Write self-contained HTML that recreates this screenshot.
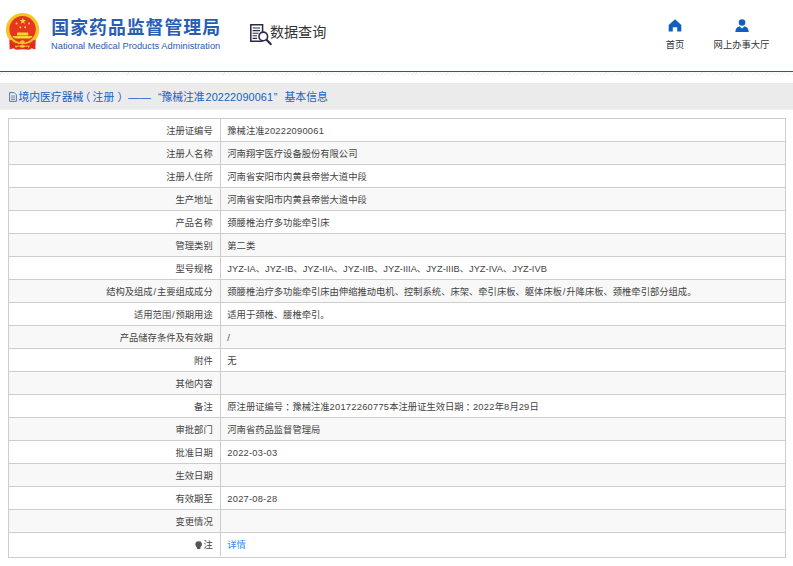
<!DOCTYPE html>
<html lang="zh-CN">
<head>
<meta charset="utf-8">
<title>国家药品监督管理局 数据查询</title>
<style>
*{box-sizing:border-box;margin:0;padding:0}
html,body{width:793px;height:566px;background:#fff;overflow:hidden}
body{position:relative;font-family:"Liberation Sans","Noto Sans CJK SC",sans-serif;color:#444;font-size:9.3px}
.abs{position:absolute;white-space:nowrap}
#emblem{left:0;top:0;width:50px;height:60px}
#title{left:51.3px;top:14.7px;font-size:17.9px;line-height:26px;font-weight:bold;color:#285db4;letter-spacing:.97px}
#sub{left:51px;top:39.6px;font-size:9.32px;line-height:12px;color:#2a5db0}
#qicon{left:249px;top:23px;width:24px;height:23px}
#qtext{left:269.9px;top:20.8px;font-size:14.1px;line-height:22px;color:#333}
.nav{text-align:center;font-size:9.3px;line-height:12px;color:#333}
#n1{left:655px;width:40px;top:38.8px}
#n2{left:701.5px;width:80px;top:38.8px}
#i1{left:668px;top:19.1px;width:14px;height:13px}
#i2{left:734.9px;top:19.4px;width:14.1px;height:13.2px}
#blue{left:0;top:70.6px;width:793px;height:1.5px;background:#0f5db9}
#hatch{left:0;top:72.4px;width:793px;height:3px;
 background:repeating-linear-gradient(135deg,rgba(0,0,0,0) 0,rgba(0,0,0,0) 1.4px,rgba(120,120,120,.13) 1.4px,rgba(120,120,120,.13) 2.19px);}
#bar{left:0;top:83px;width:793px;height:26.8px;background:#ebebeb;border-bottom:1px solid #eef0f7}
#bartext{left:0;top:88.8px;width:793px;height:16px;font-size:10.84px;line-height:16px;color:#1860c2}
.bt{position:absolute;top:0;white-space:nowrap}
#baricon{left:8.5px;top:91.5px;width:8px;height:10px}
#tbl{left:8px;top:118px;width:778px;border-left:1px solid #cdcdcd;border-right:1px solid #cdcdcd;border-bottom:1px solid #cdcdcd}
.r{height:23px;border-top:1px solid #cdcdcd;position:relative;background:#fff}
.r:nth-child(even){background:#f8f8f8}
.r .l{position:absolute;left:0;top:0;width:212px;height:22px;line-height:22px;padding-top:1px;text-align:right;padding-right:7.3px;border-right:1px solid #cdcdcd;white-space:nowrap}
.r .l{width:212px}
.r .v{position:absolute;left:212px;top:0;right:0;height:22px;line-height:22px;padding-top:1px;padding-left:6.3px;white-space:nowrap}
.r.last{height:24.5px}
.r.last .l{height:23px}
a{color:#3388ff;text-decoration:none}
.d{letter-spacing:.25px}
.sl{padding:0 .85px}
.cl{position:relative;left:2.2px}
</style>
</head>
<body>
<svg id="emblem" class="abs" viewBox="0 0 50 60">
 <circle cx="22.550" cy="29.700" r="16.700" fill="#f6c428"/>
 <path d="M9.300 39.500 L9.700 49.500 L13.500 48.300 L16 49.700 L22.500 49.200 L29 49.700 L31.500 48.300 L35.300 49.500 L35.700 39.500 C31 46.500 14 46.500 9.300 39.500 Z" fill="#e02a1c"/>
 <path d="M9.300 39.500 C14 46.800 31 46.800 35.700 39.500 L33.300 40.300 C29 45.400 16 45.400 11.800 40.300 Z" fill="#e02a1c"/>
 <circle cx="22.550" cy="29.500" r="14" fill="none" stroke="#f6c428" stroke-width="1.300"/>
 <circle cx="22.550" cy="29.300" r="13.200" fill="#e6361f"/>
 <path d="M22.800 17.800l.85 2.300h2.450l-1.950 1.500.7 2.400-2.050-1.400-2.050 1.400.7-2.400-1.950-1.500h2.450z" fill="#f9d53a"/>
 <circle cx="16.600" cy="23.400" r="1" fill="#f9d53a"/><circle cx="29" cy="23.400" r="1" fill="#f9d53a"/>
 <circle cx="20.300" cy="27.300" r="1" fill="#f9d53a"/><circle cx="25.200" cy="27.300" r="1" fill="#f9d53a"/>
 <path d="M17.600 32.600h10.200l.8 1.500h-11.800z M17 34.100h11.300v1.500H17z M12.800 35.900h19.400v1.500H12.800z M14.500 37.400h16v1H14.500z" fill="#f9d53a"/>
 <ellipse cx="22.400" cy="41.700" rx="2.300" ry="1.500" fill="#f6c428"/>
 <ellipse cx="22.400" cy="46.200" rx="2.600" ry="1.500" fill="#f6c428"/>
 <path d="M15.300 46.200h14.200" stroke="#f6c428" stroke-width="1"/>
 <path d="M15 45.800l1.800.2-.6 2.800zM29.800 45.800l-1.800.2.600 2.800z" fill="#f6c428"/>
</svg>
<div id="title" class="abs">国家药品监督管理局</div>
<div id="sub" class="abs">National Medical Products Administration</div>

<svg id="qicon" class="abs" viewBox="0 0 24 23" fill="none" stroke="#2b2b45">
 <path d="M13.600 18.300H1.800V1.700h11.800V9" stroke-width="1.500"/>
 <path d="M3.600 5h7.500M3.600 7.600h7.500M3.600 10.200h6M3.600 12.800h4.500M3.600 15.400h4.500" stroke-width="1.100"/>
 <circle cx="14.300" cy="13.400" r="4.300" stroke-width="1.600" fill="#fff"/>
 <path d="M17.500 16.800l4.200 4.300" stroke-width="2.200" stroke-linecap="round"/>
</svg>
<div id="qtext" class="abs">数据查询</div>

<svg id="i1" class="abs" viewBox="0 0 14 13"><path d="M7 0.300L0.700 6v6.500h4.100V8.300h4.400v4.200h4.100V6z" fill="#0f5fbf"/></svg>
<svg id="i2" class="abs" viewBox="0 0 15 14"><circle cx="7.500" cy="3.700" r="3.500" fill="#0f5fbf"/><path d="M0.400 13.800c0-3.500 2-5.400 4.300-6l2.800 2.400 2.800-2.400c2.300.600 4.300 2.500 4.300 6z" fill="#0f5fbf"/></svg>
<div id="n1" class="abs nav">首页</div>
<div id="n2" class="abs nav">网上办事大厅</div>

<div id="blue" class="abs"></div>
<div id="hatch" class="abs"></div>
<div id="bar" class="abs"></div>
<svg id="baricon" class="abs" viewBox="0 0 8 10" fill="none" stroke="#3a6fc0" stroke-width="0.900"><path d="M0.600 0.600h4.600l2.200 2.200v6.600H0.600z"/><path d="M2 4h4M2 5.800h4M2 7.500h4" stroke-width="0.700"/></svg>
<div id="bartext" class="abs"><span class="bt" style="left:18.4px">境内医疗器械</span><span class="bt" style="left:79.5px">（</span><span class="bt" style="left:92.6px">注册</span><span class="bt" style="left:117.5px">）</span><span class="bt" style="left:128.4px;transform:scaleX(1.06);transform-origin:0 0">——</span><span class="bt" style="left:158px">“</span><span class="bt" style="left:161.4px">豫械注准</span><span class="bt" style="left:205.6px;letter-spacing:.11px">20222090061</span><span class="bt" style="left:273.8px">”</span><span class="bt" style="left:284.5px">基本信息</span></div>

<div id="tbl" class="abs">
<div class="r"><div class="l">注册证编号</div><div class="v">豫械注准<span class="d">20222090061</span></div></div>
<div class="r"><div class="l">注册人名称</div><div class="v">河南翔宇医疗设备股份有限公司</div></div>
<div class="r"><div class="l">注册人住所</div><div class="v">河南省安阳市内黄县帝喾大道中段</div></div>
<div class="r"><div class="l">生产地址</div><div class="v">河南省安阳市内黄县帝喾大道中段</div></div>
<div class="r"><div class="l">产品名称</div><div class="v">颈腰椎治疗多功能牵引床</div></div>
<div class="r"><div class="l">管理类别</div><div class="v">第二类</div></div>
<div class="r"><div class="l">型号规格</div><div class="v">JYZ-IA、JYZ-IB、JYZ-IIA、JYZ-IIB、JYZ-IIIA、JYZ-IIIB、JYZ-IVA、JYZ-IVB</div></div>
<div class="r"><div class="l">结构及组成<span class="sl">/</span>主要组成成分</div><div class="v">颈腰椎治疗多功能牵引床由伸缩推动电机、控制系统、床架、牵引床板、躯体床板<span class="sl">/</span>升降床板、颈椎牵引部分组成。</div></div>
<div class="r"><div class="l">适用范围<span class="sl">/</span>预期用途</div><div class="v">适用于颈椎、腰椎牵引。</div></div>
<div class="r"><div class="l">产品储存条件及有效期</div><div class="v">/</div></div>
<div class="r"><div class="l">附件</div><div class="v">无</div></div>
<div class="r"><div class="l">其他内容</div><div class="v"></div></div>
<div class="r"><div class="l">备注</div><div class="v">原注册证编号<span class="cl">：</span>豫械注准<span class="d">20172260775</span>本注册证生效日期<span class="cl">：</span><span class="d">2022</span>年<span class="d">8</span>月<span class="d">29</span>日</div></div>
<div class="r"><div class="l">审批部门</div><div class="v">河南省药品监督管理局</div></div>
<div class="r"><div class="l">批准日期</div><div class="v"><span class="d">2022-03-03</span></div></div>
<div class="r"><div class="l">生效日期</div><div class="v"></div></div>
<div class="r"><div class="l">有效期至</div><div class="v"><span class="d">2027-08-28</span></div></div>
<div class="r"><div class="l">变更情况</div><div class="v"></div></div>
<div class="r last"><div class="l"><svg viewBox="0 0 8 9" style="width:7.3px;height:8.2px;vertical-align:-1.2px;margin-right:.9px"><path d="M4 .2a3.600 3.600 0 0 1 3.600 3.600c0 1.700-1.300 2.300-1.700 3.400V8.800H2.100V7.200C1.700 6.100.4 5.500.4 3.800A3.600 3.600 0 0 1 4 .2z" fill="#555"/></svg>注</div><div class="v"><a>详情</a></div></div>
</div>
</body>
</html>
